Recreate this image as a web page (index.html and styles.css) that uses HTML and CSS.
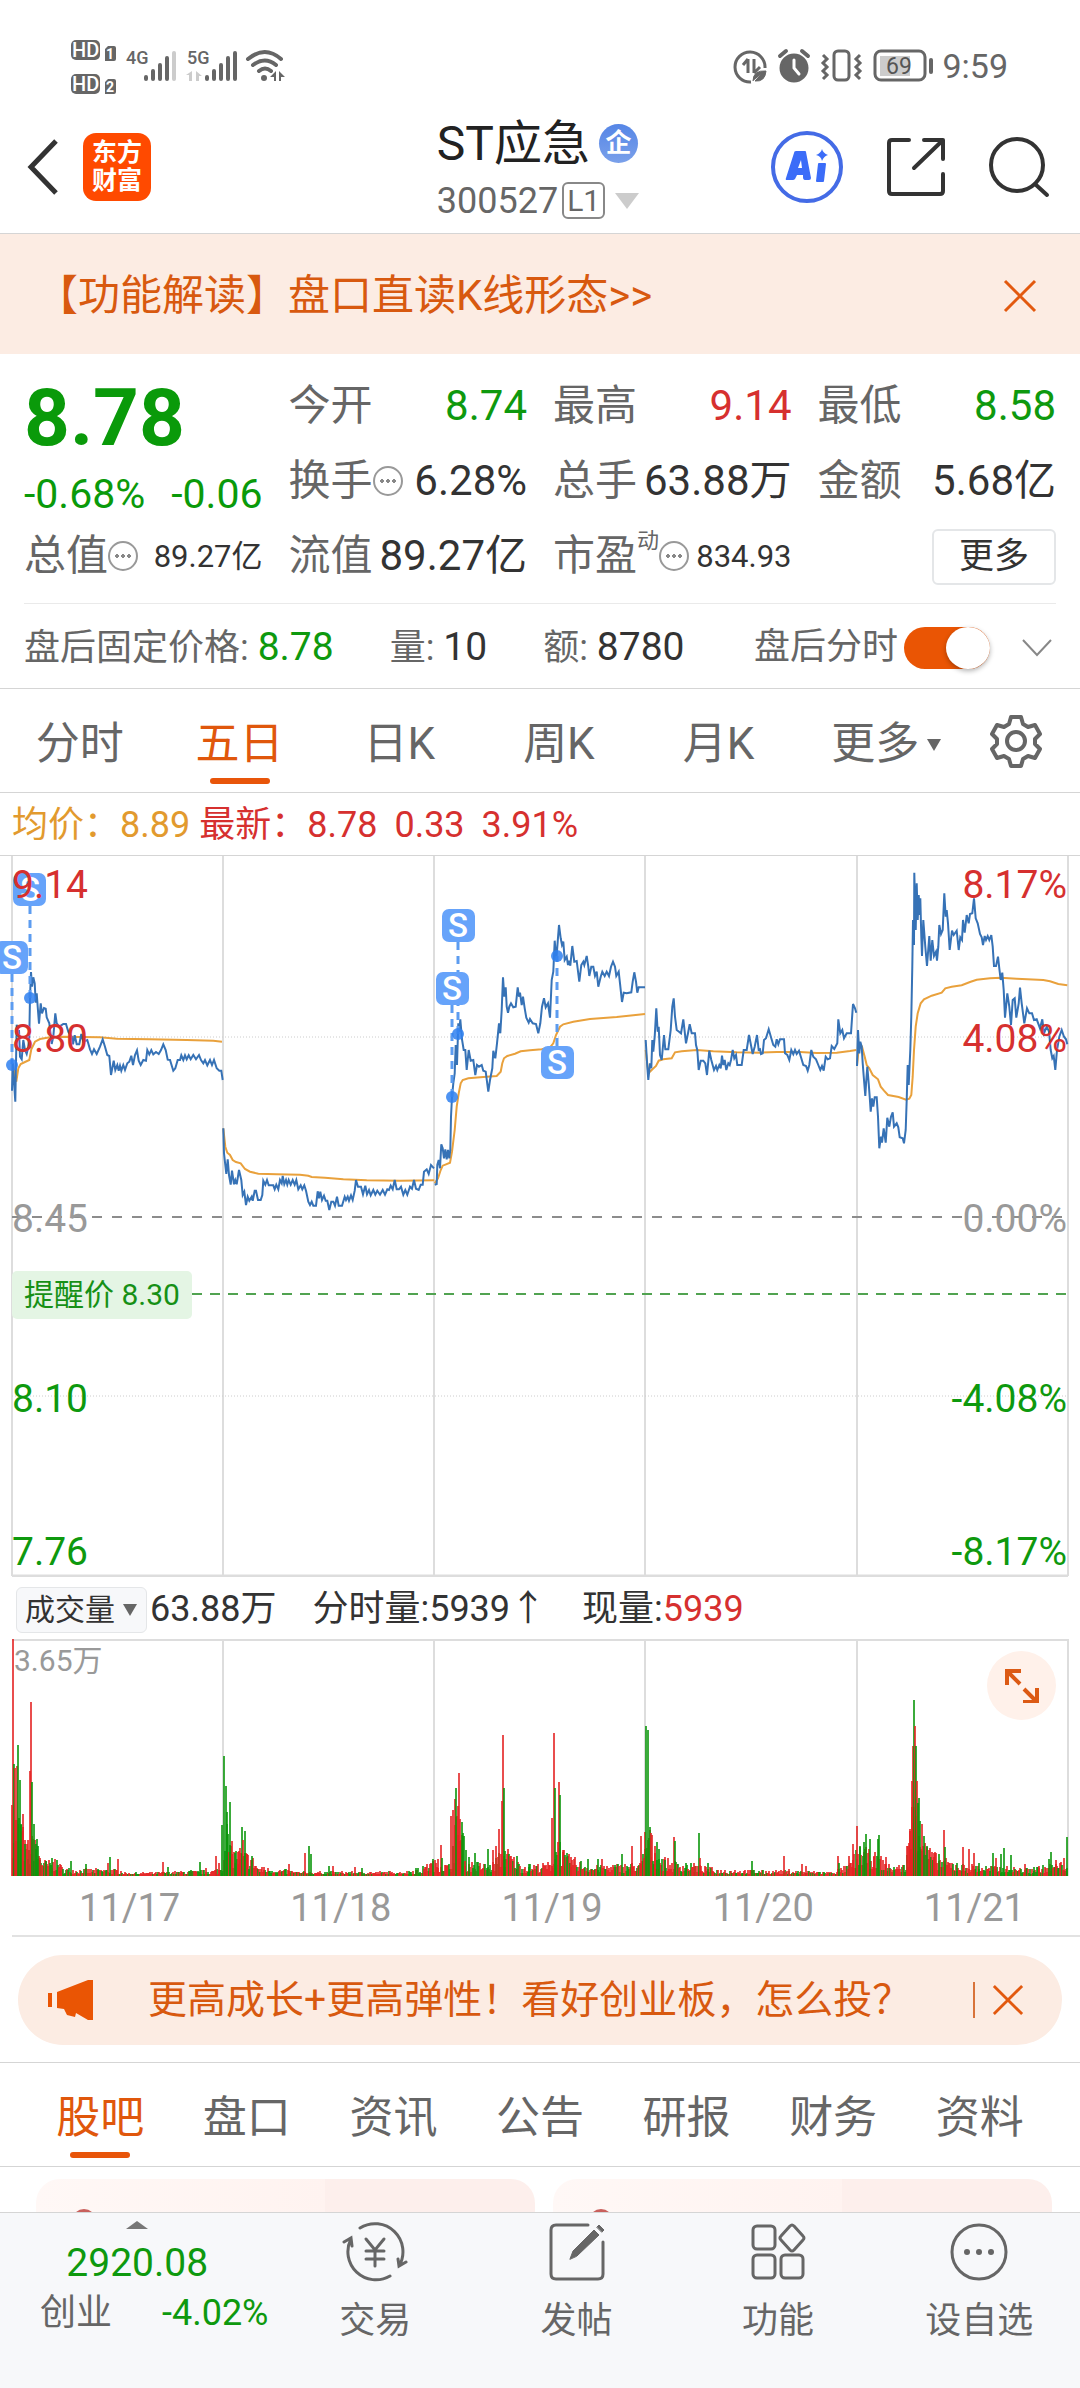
FILE: index.html
```
<!DOCTYPE html>
<html lang="zh-CN">
<head>
  <meta charset="UTF-8">
  <title>ST应急 300527</title>
  <meta name="viewport" content="width=device-width, initial-scale=1.0">
  <link rel="stylesheet" href="styles.css">
</head>
<body>
  <!-- 状态栏 -->
  <div class="status-bar">
    <svg class="status-left" width="220" height="60" viewBox="0 0 220 60" fill="#666">
      <rect x="1" y="4" width="29" height="20" rx="5"/>
      <rect x="1" y="38" width="29" height="20" rx="5"/>
      <path d="M35 13l3-3h6q2 0 2 2v11q0 2-2 2h-9zM35 46l3-3h6q2 0 2 2v11q0 2-2 2h-9z"/>
      <g class="status-hd">
        <text x="2" y="21">HD</text>
        <text x="2" y="55">HD</text>
      </g>
      <g class="status-sim">
        <text x="36" y="23">1</text>
        <text x="36" y="56">2</text>
      </g>
      <g class="status-net">
        <text x="56" y="28">4G</text>
        <text x="117" y="28">5G</text>
      </g>
      <g stroke="#666" stroke-width="4" stroke-linecap="round">
        <path d="M76 41v2M83 35v8M90 29v14M97 22v21"/>
        <path d="M104 17v26" stroke="#ccc"/>
        <path d="M137 41v2M144 35v8M151 29v14M158 22v21M165 17v26"/>
      </g>
      <path d="M122 35v10h-3v-6h-3zM126 35v10h3v-5h3z" fill="#ccc"/>
      <g fill="none" stroke="#666" stroke-width="4" stroke-linecap="round">
        <path d="M178 23q17-14 33 0M183 29q12-9 23 0M189 35q6-5 12 0"/>
      </g>
      <circle cx="194" cy="42" r="3"/>
      <path d="M206 35v10h-2v-4h-4zM209 35v10h2v-4h4z"/>
    </svg>
    <svg class="status-right" width="206" height="40" viewBox="0 0 206 40" fill="none" stroke="#666" stroke-width="3">
      <path d="M32 22a15 15 0 1 0-14 14"/>
      <path d="M15 13v14M10 19l5-6M21 13v14M21 27l6-6"/>
      <path d="M20 35q0-11 13-10-1 11-11 10l7-7" fill="#666" stroke-width="1"/>
      <circle cx="61" cy="22" r="13" fill="#666"/>
      <path d="M47 10l6-5M69 5l6 5" stroke-width="4" stroke-linecap="round"/>
      <path d="M61 14v8l5 6" stroke="#fff" stroke-linecap="round"/>
      <rect x="101" y="5" width="15" height="29" rx="4"/>
      <path d="M90 9l4 4-4 4 4 4-4 4 4 4-4 4M127 9l-4 4 4 4-4 4 4 4-4 4 4 4"/>
      <rect x="142" y="5" width="50" height="29" rx="6"/>
      <rect x="147" y="10" width="30" height="20" fill="#ccc" stroke="none"/>
      <path d="M198 14v12" stroke-width="4" stroke-linecap="round"/>
      <text class="battery-num" x="153" y="28">69</text>
    </svg>
    <span class="clock">9:59</span>
  </div>

  <header class="header">
    <div class="header-left">
      <button class="icon-btn" aria-label="返回">
        <svg width="34" height="58" viewBox="0 0 34 58" fill="none" stroke="#333" stroke-width="5"><path d="M30 3L5 29l25 26"/></svg>
      </button>
      <a class="logo" href="#">东方<br>财富</a>
    </div>
    <div class="header-title">
      <h1>ST应急<span class="corp">企</span></h1>
      <p class="code">300527<span class="level">L1</span>
        <svg width="24" height="16" viewBox="0 0 24 16" fill="#ccc"><path d="M0 0h24L12 16z"/></svg>
      </p>
    </div>
    <div class="header-right">
      <button class="icon-btn" aria-label="AI">
        <svg width="74" height="74" viewBox="0 0 74 74" fill="#3b6cf8">
          <circle cx="37" cy="37" r="34" fill="none" stroke="#446be6" stroke-width="4"/>
          <path class="ai-mark" d="M26 21h9q1 0 1 1l5 26q0 2-2 2h-4q-2 0-2-3v-2h-6l-2 4q-1 1-2 1h-6q-2 0-1-2l8-25q0-2 2-2zm2 17h4l-1-8zM49 33h6q1 0 1 1l-2 17q0 1-1 1h-6q-1 0-1-1l2-17q0-1 1-1zM52 19q1 4 6 6-4 1-6 6-1-5-6-6 5-2 6-6z" fill-rule="evenodd"/>
        </svg>
      </button>
      <button class="icon-btn" aria-label="分享">
        <svg width="60" height="60" viewBox="0 0 60 60" fill="none" stroke="#333" stroke-width="4" stroke-linecap="round" stroke-linejoin="round"><path d="M23 3H6q-3 0-3 3v48q0 3 3 3h48q3 0 3-3V37M38 3h19v19M56 4L28 31"/></svg>
      </button>
      <button class="icon-btn" aria-label="搜索">
        <svg width="62" height="62" viewBox="0 0 62 62" fill="none" stroke="#333" stroke-width="4" stroke-linecap="round"><circle cx="29" cy="29" r="26"/><path d="M47 48l12 11"/></svg>
      </button>
    </div>
  </header>

  <div class="notice">
    <a href="#">【功能解读】盘口直读K线形态&gt;&gt;</a>
    <button class="icon-btn" aria-label="关闭">
      <svg width="34" height="34" viewBox="0 0 34 34" stroke="#e2590f" stroke-width="3"><path d="M2 2l30 30M32 2L2 32"/></svg>
    </button>
  </div>

  <!-- 行情数据 -->
  <section class="quote">
    <div class="price-box">
      <div class="price">8.78</div>
      <div class="change"><span>-0.68%</span><span>-0.06</span></div>
    </div>
    <div class="item"><span class="label">今开</span><span class="down">8.74</span></div>
    <div class="item"><span class="label">最高</span><span class="up">9.14</span></div>
    <div class="item"><span class="label">最低</span><span class="down">8.58</span></div>
    <div class="item"><span class="label">换手<i class="info"></i></span><span>6.28%</span></div>
    <div class="item"><span class="label">总手</span><span>63.88万</span></div>
    <div class="item"><span class="label">金额</span><span>5.68亿</span></div>
    <div class="item"><span class="label">总值<i class="info"></i></span><span class="small">89.27亿</span></div>
    <div class="item"><span class="label">流值</span><span>89.27亿</span></div>
    <div class="item"><span class="label">市盈<sup>动</sup><i class="info"></i></span><span class="small">834.93</span></div>
    <div class="item item-more"><button class="more-btn">更多</button></div>
  </section>

  <section class="after">
    <span>盘后固定价格: <b class="down">8.78</b></span>
    <span>量: <b>10</b></span>
    <span>额: <b>8780</b></span>
    <label class="after-switch" for="afterHours">盘后分时<input type="checkbox" id="afterHours" class="switch" checked></label>
    <button class="icon-btn" aria-label="展开">
      <svg width="30" height="18" viewBox="0 0 30 18" fill="none" stroke="#888" stroke-width="2"><path d="M1 1l14 15L29 1"/></svg>
    </button>
  </section>

  <nav class="period-tabs">
    <button class="tab">分时</button>
    <button class="tab active">五日</button>
    <button class="tab">日K</button>
    <button class="tab">周K</button>
    <button class="tab">月K</button>
    <button class="tab">更多<svg class="caret" width="14" height="12" viewBox="0 0 14 12" fill="#666"><path d="M0 0h14L7 12z"/></svg></button>
    <button class="icon-btn" aria-label="设置">
      <svg width="52" height="54" viewBox="0 0 52 54" fill="none" stroke="#666" stroke-width="4" stroke-linejoin="round">
        <path d="M21 3h10l2 7 5 3 7-2 5 9-5 5v5l5 5-5 9-7-2-5 3-2 7H21l-2-7-5-3-7 2-5-9 5-5v-5l-5-5 5-9 7 2 5-3z"/>
        <circle cx="26" cy="27" r="9"/>
      </svg>
    </button>
  </nav>

  <div class="chart-legend">
    <span class="avg">均价：8.89</span>
    <span class="up">最新：8.78</span>
    <span class="up pct">0.33</span>
    <span class="up pct">3.91%</span>
  </div>

  <!-- 五日走势图 -->
  <svg class="price-chart" viewBox="0 0 1080 721">
    <g stroke="#ddd" stroke-width="2">
      <path d="M12 0v720M223 0v720M434 0v720M645 0v720M857 0v720M1068 0v720"/>
      <path d="M12 720h1056" stroke-width="3"/>
      <path d="M12 181h1056M12 540h1056" stroke-width="1" stroke="#ccc" stroke-dasharray="1 2"/>
    </g>
    <path d="M12 361h1056" stroke="#8c8c8c" stroke-width="2" stroke-dasharray="10 10"/>
    <path d="M192 438h876" stroke="#51a351" stroke-width="2" stroke-dasharray="10 8"/>
    <g id="avgLines" class="avg-line"></g>
    <g id="priceLines" class="price-line"></g>
    <g class="mark-line">
      <path d="M30 50v92M12 118v90M458 86v92M452 149v92M557 190v-90"/>
    </g>
    <g fill="#2f80f0" fill-opacity=".85">
      <circle cx="30" cy="142" r="6"/>
      <circle cx="12" cy="209" r="6"/>
      <circle cx="458" cy="178" r="6"/>
      <circle cx="452" cy="241" r="6"/>
      <circle cx="557" cy="100" r="6"/>
    </g>
    <g class="mark-box">
      <rect x="13" y="17" width="33" height="33" rx="7"/>
      <rect x="-5" y="85" width="33" height="33" rx="7"/>
      <rect x="442" y="53" width="33" height="33" rx="7"/>
      <rect x="436" y="116" width="33" height="33" rx="7"/>
      <rect x="541" y="190" width="33" height="33" rx="7"/>
    </g>
    <g class="mark-text">
      <text x="30" y="45">S</text>
      <text x="12" y="113">S</text>
      <text x="458" y="81">S</text>
      <text x="452" y="144">S</text>
      <text x="557" y="218">S</text>
    </g>
    <rect x="12" y="415" width="180" height="48" rx="5" fill="#e4f5e4"/>
    <text class="alert-text" x="24" y="449">提醒价 8.30</text>
    <g class="axis">
      <text class="up" x="12" y="42">9.14</text>
      <text class="up" x="12" y="196">8.80</text>
      <text class="flat" x="12" y="376">8.45</text>
      <text class="down" x="12" y="556">8.10</text>
      <text class="down" x="12" y="709">7.76</text>
    </g>
    <g class="axis axis-right">
      <text class="up" x="1067" y="42">8.17%</text>
      <text class="up" x="1067" y="196">4.08%</text>
      <text class="flat" x="1067" y="376">0.00%</text>
      <text class="down" x="1067" y="556">-4.08%</text>
      <text class="down" x="1067" y="709">-8.17%</text>
    </g>
  </svg>

  <div class="vol-legend">
    <div class="vol-select">
      <select id="indicator" aria-label="指标">
        <option>成交量</option>
      </select>
      <svg width="14" height="12" viewBox="0 0 14 12" fill="#666"><path d="M0 0h14L7 12z"/></svg>
    </div>
    <span class="vol-total">63.88万</span>
    <span class="vol-minute">分时量:5939↑</span>
    <span>现量:<span class="up">5939</span></span>
  </div>

  <div class="volume">
    <svg class="vol-chart" viewBox="0 0 1080 238">
      <path d="M12 1h1056M223 0v237M434 0v237M645 0v237M857 0v237M1068 0v237" stroke="#ddd" stroke-width="2"/>
      <g id="volBars"></g>
      <text class="vol-max" x="14" y="32">3.65万</text>
    </svg>
    <button class="expand" aria-label="全屏">
      <svg width="34" height="34" viewBox="0 0 34 34" fill="none" stroke="#dc5a14" stroke-width="4"><path d="M2 16V2h14M3 3l12 12M32 19v14H18M31 32L19 20"/></svg>
    </button>
  </div>
  <div class="dates">
    <span>11/17</span><span>11/18</span><span>11/19</span><span>11/20</span><span>11/21</span>
  </div>

  <div class="promo">
    <svg width="46" height="40" viewBox="0 0 46 40" fill="#ea5504"><path d="M0 13h4v14H0zM9 12L40 0h5v40h-5l-12-7-1 4-8-2-3-6-7-1z"/></svg>
    <a href="#">更高成长+更高弹性！看好创业板，怎么投？</a>
    <button class="icon-btn" aria-label="关闭">
      <svg width="32" height="32" viewBox="0 0 34 34" stroke="#e2590f" stroke-width="3"><path d="M2 2l30 30M32 2L2 32"/></svg>
    </button>
  </div>

  <nav class="info-tabs">
    <button class="tab active">股吧</button>
    <button class="tab">盘口</button>
    <button class="tab">资讯</button>
    <button class="tab">公告</button>
    <button class="tab">研报</button>
    <button class="tab">财务</button>
    <button class="tab">资料</button>
  </nav>

  <div class="feed">
    <div class="card"><i class="dot"></i></div>
    <div class="card"><i class="dot"></i></div>
  </div>

  <!-- 底部导航 -->
  <footer class="bottom">
    <a class="index" href="#">
      <svg width="22" height="8" viewBox="0 0 22 8" fill="#777"><path d="M0 8L11 0l11 8z"/></svg>
      <span class="index-num">2920.08</span>
      <span class="index-row"><span>创业</span><span class="down">-4.02%</span></span>
    </a>
    <a href="#">
      <svg width="66" height="60" viewBox="0 0 66 60" fill="none" stroke="#666" stroke-width="3" stroke-linecap="round">
        <path d="M18 6a28 28 0 0 1 39 38M48 54A28 28 0 0 1 9 17M2 20l7-4 1 8M64 40l-7 4-1-7"/>
        <path d="M24 17l9 11 9-11M33 28v16M24 29h18M24 37h18"/>
      </svg>
      交易
    </a>
    <a href="#">
      <svg width="58" height="60" viewBox="0 0 58 60" fill="none" stroke="#666" stroke-width="3" stroke-linecap="round">
        <path d="M40 3H8q-5 0-5 5v44q0 5 5 5h42q5 0 5-5V20"/>
        <path d="M22 37l3-8L46 8l5 5-22 21zM49 5l2-2 5 5-2 2z" fill="#666" stroke-width="1"/>
      </svg>
      发帖
    </a>
    <a href="#">
      <svg width="56" height="58" viewBox="0 0 56 58" fill="none" stroke="#666" stroke-width="3" stroke-linejoin="round">
        <rect x="3" y="3" width="22" height="23" rx="4"/>
        <rect x="3" y="32" width="22" height="23" rx="4"/>
        <rect x="31" y="32" width="22" height="23" rx="4"/>
        <path d="M40 3q2-2 4 0l9 10q2 2 0 4l-9 10q-2 2-4 0l-9-10q-2-2 0-4z"/>
      </svg>
      功能
    </a>
    <a href="#">
      <svg width="58" height="58" viewBox="0 0 58 58" fill="#666"><circle cx="29" cy="29" r="27" fill="none" stroke="#666" stroke-width="3"/><circle cx="17" cy="29" r="3"/><circle cx="29" cy="29" r="3"/><circle cx="41" cy="29" r="3"/></svg>
      设自选
    </a>
  </footer>

  <script src="chart.js"></script>
</body>
</html>
```

FILE: styles.css
```
* {
  margin: 0;
  padding: 0;
  box-sizing: border-box;
}
body {
  background: #fff;
  color: #333;
  font-family: Roboto, "Noto Sans CJK SC", sans-serif;
  font-size: 36px;
  line-height: 1.2;
  overflow-x: hidden;
}
a {
  color: inherit;
  text-decoration: none;
}
button, select {
  font-family: inherit;
  line-height: inherit;
  color: inherit;
  background: none;
  border: none;
  cursor: pointer;
}
svg {
  display: block;
}
b, h1, i {
  font-weight: 400;
  font-style: normal;
}
.icon-btn {
  display: flex;
  align-items: center;
  justify-content: center;
}
.up { color: #d6302f; fill: #d6302f; }
.down { color: #0e990e; fill: #0e990e; }
.flat { fill: #999; }

/* 状态栏 */
.status-bar {
  display: flex;
  align-items: center;
  height: 104px;
  padding: 28px 72px 0 70px;
}
.status-right {
  margin-left: auto;
}
.status-hd text { font-size: 20px; font-weight: 500; fill: #fff; }
.status-sim text { font-size: 14px; font-weight: 700; fill: #fff; }
.status-net text { font-size: 18px; font-weight: 500; }
.battery-num { font-size: 23px; fill: #555; stroke: none; }
.clock {
  margin-left: 3px;
  font-size: 34px;
  color: #666;
}

/* 顶部标题 */
.header {
  display: grid;
  grid-template-columns: 1fr auto 1fr;
  align-items: center;
  height: 130px;
  padding: 0 30px 4px 26px;
  border-bottom: 1px solid #d5d5d5;
}
.header-left {
  display: flex;
  align-items: center;
  gap: 23px;
}
.logo {
  width: 68px;
  height: 68px;
  padding-top: 6px;
  border-radius: 13px;
  background: #ff4a00;
  color: #fff;
  font-size: 25px;
  font-weight: 700;
  line-height: 28px;
  text-align: center;
}
.header-title {
  padding-top: 10px;
}
.header-title h1 {
  display: flex;
  align-items: center;
  gap: 9px;
  font-size: 48px;
  line-height: 58px;
  color: #222;
}
.corp {
  width: 39px;
  height: 39px;
  border-radius: 50%;
  background: linear-gradient(#5686e6, #7aa0ea);
  color: #fff;
  font-size: 26px;
  font-weight: 700;
  line-height: 38px;
  text-align: center;
}
.code {
  display: flex;
  align-items: center;
  line-height: 56px;
  color: #666;
}
.level {
  height: 37px;
  margin: 0 10px 0 4px;
  padding: 0 3px;
  border: 2px solid #888;
  border-radius: 6px;
  font-size: 30px;
  line-height: 33px;
}
.header-right {
  display: flex;
  align-items: center;
  justify-content: flex-end;
  gap: 42px;
}

/* 公告条 */
.notice {
  display: flex;
  align-items: center;
  justify-content: space-between;
  height: 120px;
  padding: 4px 43px 0 36px;
  background: #fcece3;
  color: #d8590f;
  font-size: 42px;
}

/* 行情 */
.quote {
  display: grid;
  grid-template-columns: repeat(4, 1fr);
  grid-auto-rows: 75px;
  column-gap: 26px;
  padding: 15px 24px 9px;
  font-size: 42px;
}
.price-box {
  grid-row: span 2;
  color: #0a9a0a;
}
.price {
  font-size: 80px;
  font-weight: 700;
  line-height: 98px;
}
.change {
  display: flex;
  justify-content: space-between;
  font-size: 41px;
  line-height: 54px;
}
.item {
  display: flex;
  align-items: center;
  justify-content: space-between;
  white-space: nowrap;
}
.label {
  display: flex;
  align-items: center;
  color: #666;
}
.label sup {
  align-self: flex-start;
  font-size: 22px;
  line-height: 20px;
}
.info {
  display: flex;
  align-items: center;
  justify-content: center;
  width: 30px;
  height: 30px;
  border: 2px solid #999;
  border-radius: 50%;
}
.info::before {
  content: "";
  width: 18px;
  height: 4px;
  background: radial-gradient(circle, #888 2px, transparent 2px) 0 0 / 6px 4px;
}
.small {
  font-size: 31px;
}
.item-more {
  justify-content: flex-end;
}
.more-btn {
  width: 124px;
  height: 56px;
  border: 2px solid #e4e6e8;
  border-radius: 6px;
  font-size: 35px;
}

/* 盘后 */
.after {
  display: flex;
  align-items: center;
  gap: 56px;
  height: 85px;
  margin: 0 24px;
  padding: 3px 4px 0 0;
  border-top: 1px solid #eaeaea;
  color: #666;
  white-space: nowrap;
}
.after b {
  font-size: 39px;
  color: #333;
}
.after b.down {
  color: #0e990e;
}
.after-switch {
  display: flex;
  align-items: center;
  gap: 6px;
  margin: 0 -24px 0 auto;
}
.switch {
  appearance: none;
  width: 86px;
  height: 42px;
  border-radius: 21px;
  background: #ea5504;
}
.switch::before {
  content: "";
  display: block;
  width: 44px;
  height: 42px;
  margin-left: 42px;
  border-radius: 50%;
  background: #fff;
  box-shadow: 0 2px 5px rgba(0, 0, 0, 0.3);
}

/* 周期切换 */
.period-tabs {
  display: grid;
  grid-template-columns: repeat(5, 160fr) 176fr 84fr;
  height: 105px;
  padding-right: 22px;
  border-top: 1px solid #d5d5d5;
  border-bottom: 1px solid #d5d5d5;
}
.tab {
  position: relative;
  display: flex;
  align-items: center;
  justify-content: center;
  padding-top: 8px;
  color: #666;
  font-size: 44px;
}
.tab.active {
  color: #e0570c;
}
.tab.active::after {
  content: "";
  position: absolute;
  bottom: 8px;
  width: 60px;
  height: 6px;
  border-radius: 3px;
  background: #e8550a;
}
.caret {
  margin-left: 8px;
}

.chart-legend {
  display: flex;
  align-items: center;
  height: 63px;
  padding: 4px 0 0 12px;
  border-bottom: 1px solid #d5d5d5;
}
.chart-legend .avg {
  margin-right: 9px;
  color: #e29a2e;
}
.chart-legend .pct {
  margin-left: 17px;
}

/* 走势图 */
.price-chart, .vol-chart {
  width: 100%;
  height: auto;
}
.price-line {
  fill: none;
  stroke: #3672b6;
  stroke-width: 2;
}
.avg-line {
  fill: none;
  stroke: #e9a13c;
  stroke-width: 2;
}
.mark-line {
  stroke: #5c9cf0;
  stroke-width: 3;
  stroke-dasharray: 8 6;
}
.mark-box {
  fill: #66a3fa;
}
.mark-text {
  fill: #fff;
  font-size: 33px;
  font-weight: 500;
  text-anchor: middle;
}
.axis {
  font-size: 39px;
}
.axis-right {
  text-anchor: end;
}
.alert-text {
  fill: #169016;
  font-size: 30px;
}

/* 成交量 */
.vol-legend {
  display: flex;
  align-items: center;
  height: 62px;
  padding: 3px 0 0 16px;
  white-space: nowrap;
}
.vol-select {
  display: flex;
  align-items: center;
  width: 131px;
  height: 46px;
  padding-left: 8px;
  border: 1px solid #e4e6e8;
  border-radius: 6px;
  background: #f7f8fa;
}
.vol-select select {
  appearance: none;
  width: 98px;
  font-size: 30px;
}
.vol-total {
  margin-left: 3px;
}
.vol-minute {
  margin: 0 36px;
}
.volume {
  position: relative;
}
.vol-max {
  fill: #999;
  font-size: 30px;
}
.expand {
  position: absolute;
  top: 12px;
  right: 24px;
  display: flex;
  align-items: center;
  justify-content: center;
  width: 69px;
  height: 69px;
  border-radius: 50%;
  background: #fff1ea;
}
.dates {
  display: grid;
  grid-template-columns: repeat(5, 1fr);
  margin-left: 12px;
  padding-left: 12px;
  height: 60px;
  border-bottom: 2px solid #e2e2e2;
  color: #999;
  font-size: 38px;
  line-height: 62px;
  text-align: center;
}

/* 推广条 */
.promo {
  display: flex;
  align-items: center;
  height: 90px;
  margin: 18px 18px 17px;
  padding: 0 38px 0 30px;
  border-radius: 45px;
  background: #fcece3;
  color: #d8590f;
  font-size: 39px;
  white-space: nowrap;
}
.promo a {
  margin-left: 54px;
}
.promo .icon-btn {
  height: 36px;
  margin-left: auto;
  padding-left: 17px;
  border-left: 2px solid #d8733a;
}

.info-tabs {
  display: grid;
  grid-template-columns: repeat(7, 1fr);
  height: 105px;
  padding: 0 27px;
  border-top: 1px solid #d5d5d5;
  border-bottom: 1px solid #d5d5d5;
}
.feed {
  display: grid;
  grid-template-columns: 1fr 1fr;
  gap: 18px;
  height: 45px;
  padding: 12px 28px 0 36px;
  overflow: hidden;
}
.card {
  height: 120px;
  padding: 30px 36px;
  border-radius: 24px;
  background: linear-gradient(90deg, #fff8f6, #fff3f0 58%, #fdefec 58%);
}
.dot {
  display: block;
  width: 24px;
  height: 24px;
  border-radius: 50%;
  background: #c9605c;
}

/* 底部 */
.bottom {
  display: grid;
  grid-template-columns: 274fr repeat(4, 201fr);
  height: 176px;
  border-top: 1px solid #d5d5d5;
  background: #f7f8fa;
  color: #666;
}
.bottom a {
  display: flex;
  flex-direction: column;
  align-items: center;
  line-height: 50px;
}
.bottom a svg {
  height: 60px;
  margin: 9px 0 14px;
}
.bottom .index svg {
  height: 8px;
  margin: 8px 0 9px;
}
.index-num {
  color: #0e990e;
  font-size: 39px;
}
.index-row {
  display: flex;
  justify-content: space-between;
  width: 100%;
  padding: 0 6px 0 40px;
}
```

FILE: chart.js
```
// 每段: [x偏移, 点列], 单位为 1/3 像素
const prices = [
  [0, '36,722 38,640 41,680 46,755 50,524 54,560 57,540 60,620 65,628 70,570 75,600 80,612 85,590 88,560 90,440 93,366 96,410 100,382 104,400 107,458 110,430 113,470 117,521 122,460 126,490 132,474 137,476 140,502 148,520 155,582 160,560 166,490 170,520 178,530 190,522 198,522 205,545 215,560 219,583 224,556 230,583 238,583 244,552 250,575 262,570 270,598 276,612 282,598 290,612 300,590 308,568 315,590 322,615 328,618 333,675 341,632 346,660 352,645 356,662 360,647 364,662 370,645 375,660 382,640 388,635 394,617 399,645 405,615 411,601 416,632 422,645 430,630 438,632 442,600 448,613 454,600 460,613 468,606 476,612 483,600 490,583 497,600 503,629 510,630 520,662 526,655 533,630 540,630 544,616 550,630 555,616 560,628 566,616 572,628 580,615 588,628 597,615 603,630 610,640 615,630 622,646 630,630 636,645 642,630 650,655 658,662 664,662 668,690'],
  [0, '670,835 672,910 676,945 679,972 683,928 687,975 692,1004 696,962 702,1003 706,990 710,1003 717,960 724,990 728,1035 733,1025 738,1065 743,1040 748,1052 755,1040 758,1052 764,1022 768,1022 774,1050 782,1050 787,1035 790,992 796,1004 801,990 806,1006 813,1006 820,1006 824,1018 829,1004 835,1018 840,990 845,1000 848,978 853,1003 858,990 862,1004 866,990 872,1004 878,990 884,1004 889,990 895,1018 902,1006 907,1018 913,1006 918,1022 925,1055 930,1065 935,1055 940,1067 948,1067 953,1024 957,1045 961,1025 966,1050 972,1037 977,1052 982,1052 988,1080 994,1055 1000,1055 1005,1067 1011,1040 1016,1067 1026,1067 1034,1040 1038,1050 1043,1040 1047,1052 1053,1036 1058,1050 1064,1022 1068,990 1074,1010 1083,1010 1089,1033 1096,1007 1101,1033 1107,1020 1112,1036 1120,1020 1126,1034 1132,1022 1140,1034 1148,1020 1155,1034 1162,1018 1167,1020 1172,1007 1178,1018 1184,990 1190,1018 1197,1018 1203,1010 1210,1034 1216,1020 1222,1034 1230,1010 1236,1016 1242,990 1248,1016 1256,1020 1262,1004 1268,1004 1272,965 1280,958 1286,972 1293,945 1302,955'],
  [1290, '14,1004 20,1002 22,945 26,930 30,955 34,883 38,895 42,925 46,898 50,928 54,900 58,925 61,900 63,800 66,740 70,700 74,670 77,585 81,645 85,520 88,545 91,508 96,568 101,600 106,600 110,660 116,600 122,632 130,630 136,675 141,645 147,650 155,645 160,662 167,665 175,725 180,690 187,655 190,602 196,625 201,580 207,520 211,550 215,480 219,382 223,440 227,412 230,470 234,488 238,470 243,460 250,472 257,470 263,412 267,440 270,428 275,465 279,440 284,475 289,503 296,518 300,507 308,520 318,522 325,550 331,520 336,470 342,445 347,472 354,460 360,503 365,390 370,365 374,272 379,330 383,275 387,225 392,265 396,285 400,275 404,330 410,320 414,345 418,332 421,347 427,288 433,335 440,333 448,395 454,345 460,335 463,345 470,318 475,350 478,378 484,350 490,350 495,378 500,365 505,410 512,380 517,365 524,378 530,365 537,378 543,350 549,335 555,350 559,378 566,365 570,400 576,456 581,428 590,430 604,427 608,395 613,367 618,395 622,428 626,412 645,412'],
  [1290, '647,570 652,650 655,690 660,640 664,655 667,570 670,605 674,560 679,475 683,545 686,530 690,615 695,630 702,555 706,598 715,598 722,540 727,470 731,445 735,500 740,540 747,545 753,550 760,508 764,545 768,580 774,550 779,523 785,550 795,550 798,585 802,600 806,660 812,632 820,632 826,640 831,675 838,602 844,630 852,660 858,648 862,660 868,645 872,655 876,617 880,645 884,630 889,660 895,640 899,645 903,630 908,600 913,625 918,615 922,645 935,645 941,600 950,600 957,555 968,612 974,590 981,555 986,600 990,598 993,612 998,610 1002,570 1008,565 1016,538 1024,565 1030,585 1036,590 1040,568 1045,583 1050,568 1062,568 1065,610 1072,615 1078,630 1084,600 1090,613 1095,600 1100,612 1107,602 1114,625 1120,645 1128,648 1133,662 1138,645 1144,600 1150,620 1158,628 1165,645 1171,660 1176,648 1181,662 1187,620 1193,628 1200,625 1205,588 1213,597 1222,580 1225,508 1231,550 1237,540 1242,565 1250,550 1263,550 1269,462 1275,475 1279,488'],
  [2250, '321,648 324,540 328,610 331,575 335,590 338,640 342,690 346,738 349,690 352,650 356,700 359,740 362,785 366,745 370,770 374,742 380,742 384,800 388,895 393,860 396,878 401,835 407,878 412,803 418,830 423,800 428,787 432,830 440,820 445,832 449,862 458,865 462,880 467,840 470,750 473,645 476,705 481,600 484,500 487,350 489,210 492,285 493,68 497,240 500,100 503,210 506,135 509,195 511,145 514,260 516,318 520,210 526,290 531,348 538,258 542,332 547,270 552,318 558,305 561,332 565,290 568,225 573,252 578,240 583,130 587,200 590,180 594,220 599,300 606,242 611,255 620,242 626,300 631,262 636,270 639,210 644,248 650,195 656,220 660,192 667,190 672,145 677,205 683,220 690,252 695,262 699,285 704,258 708,270 713,258 718,270 724,255 728,290 732,348 738,348 744,320 748,355 752,390 757,368 761,420 765,503 772,430 778,470 783,525 788,450 794,445 799,503 806,460 810,413 815,460 823,520 831,475 838,490 846,490 852,510 860,508 870,535 877,508 882,550 890,530 897,545 902,600 907,625 911,618 916,660 921,600 928,560 935,540 942,560 948,568 952,583']
];
const averages = [
  [0, '38,640 49,695 55,655 62,642 75,636 88,630 94,598 105,575 120,567 150,562 190,560 240,561 300,562 350,566 450,568 560,570 640,572 666,575'],
  [0, '670,835 676,890 682,908 690,915 698,930 708,936 722,940 735,957 750,965 775,971 830,973 900,974 925,977 935,981 975,983 1030,988 1100,991 1200,992 1303,991'],
  [1290, '14,1000 24,985 32,960 38,947 48,943 60,938 66,905 74,840 80,770 86,730 92,700 98,690 115,685 160,681 200,678 212,665 217,640 222,625 232,618 255,611 272,604 300,601 335,598 360,592 370,580 378,555 390,530 400,523 430,515 480,507 560,501 610,496 645,492'],
  [1290, '647,600 655,670 668,657 678,648 686,632 700,628 725,625 735,607 755,604 800,600 850,604 920,607 990,608 1040,606 1110,606 1160,609 1220,608 1260,603 1279,600'],
  [2250, '321,648 326,595 336,590 344,620 350,645 358,655 368,675 384,688 392,710 402,722 414,735 446,741 468,749 478,746 484,735 488,680 492,600 497,530 503,490 512,460 522,448 545,437 575,428 586,415 605,410 635,406 660,396 680,389 720,385 752,383 800,386 880,390 900,394 925,402 952,406']
];

function drawLines(id, days) {
  document.getElementById(id).innerHTML = days.map(([offset, points]) => {
    const pts = points.split(' ').map(p => {
      const [x, y] = p.split(',').map(Number);
      return ((x + offset) / 3).toFixed(1) + ',' + ((y - 18) / 3).toFixed(1);
    });
    return '<polyline points="' + pts.join(' ') + '"/>';
  }).join('');
}
drawLines('avgLines', averages);
drawLines('priceLines', prices);

// 成交量: 主要柱子 x 高度 颜色
const peaks = '12 71 r,13 237 r,14 112 g,15 108 r,17 110 r,18 131 g,20 96 g,21 52 g,23 62 r,25 32 g,28 36 r,30 105 r,31 174 r,32 94 g,34 52 g,36 32 g,38 30 g,40 18 r,46 15 g,52 18 g,55 17 r,60 12 r,71 15 g,86 12 g,108 13 r,110 19 g,118 17 r,163 14 r,168 9 g,191 6 g,200 14 g,206 8 r,216 20 r,219 13 r,' +
  '222 51 g,224 120 g,226 90 g,227 64 g,230 74 g,232 35 r,235 23 g,238 24 r,240 28 r,242 49 g,243 36 r,245 45 g,247 22 r,252 20 g,264 9 r,289 12 r,305 23 r,309 30 g,311 22 g,329 10 g,333 10 r,355 9 r,362 8 g,416 8 g,425 9 r,430 12 r,' +
  '433 17 g,438 17 r,441 31 r,442 18 g,451 60 r,453 66 r,455 77 r,456 88 g,458 70 r,459 103 r,460 57 r,462 54 g,465 15 r,469 19 g,475 23 g,488 27 g,493 26 r,496 30 r,499 47 r,502 75 r,503 141 r,504 88 g,505 25 g,510 15 r,517 20 g,529 12 g,552 58 r,554 143 r,555 88 g,558 34 r,559 94 r,560 81 g,563 24 r,571 19 r,588 17 g,598 17 g,602 17 r,622 22 g,632 30 r,641 40 r,645 44 r,' +
  '646 150 g,648 146 g,650 49 g,651 43 r,655 30 r,657 34 g,659 27 g,665 16 g,674 39 r,675 35 g,686 13 g,694 13 r,699 43 g,700 18 r,708 13 g,752 15 g,784 20 r,789 7 r,802 12 r,806 10 r,838 20 r,839 13 g,849 20 r,853 32 r,' +
  '857 50 r,860 29 g,864 34 g,866 42 g,870 37 g,874 20 r,878 37 g,879 41 g,886 19 r,907 30 r,908 30 r,910 47 r,912 95 r,913 130 r,914 176 g,915 150 r,916 130 g,917 95 r,918 73 g,919 78 g,920 55 g,922 52 r,924 40 g,927 30 g,929 26 r,934 19 r,939 22 g,944 46 r,945 29 g,957 13 g,963 29 r,969 27 r,974 23 r,979 13 g,993 23 g,996 18 r,1001 22 g,1004 28 g,1011 21 g,1025 12 r,1034 9 g,1039 10 r,1049 17 g,1051 24 g,1056 16 r,1064 18 r,1067 39 g';
// 其余分钟的量级
const base = [[12, 60], [20, 55], [24, 32], [28, 25], [34, 45], [38, 22], [44, 14], [58, 13], [62, 7], [120, 6], [125, 3], [210, 5], [222, 8], [224, 60], [230, 25], [250, 20], [258, 8], [280, 6], [300, 4], [400, 4], [420, 7], [432, 14], [450, 10], [454, 55], [462, 45], [466, 14], [490, 10], [498, 20], [506, 25], [520, 10], [550, 12], [558, 35], [564, 20], [590, 9], [640, 12], [648, 45], [655, 22], [668, 14], [720, 6], [830, 4], [848, 10], [858, 28], [880, 17], [890, 9], [905, 11], [914, 90], [920, 50], [926, 27], [940, 16], [960, 11], [985, 9], [1030, 7], [1068, 14]];
const colors = { r: '#e32222', g: '#0a960a' };

function bar(x, h, c) {
  return '<rect x="' + x + '" y="' + (237 - h) + '" width="2" height="' + h + '" fill="' + colors[c] + '" fill-opacity=".8"/>';
}

let seed = 7;
function rnd() {
  seed = (seed * 16807) % 2147483647;
  return seed / 2147483647;
}

let bars = '';
for (let x = 12, i = 0; x < 1067; x++) {
  while (x > base[i + 1][0]) i++;
  const [x0, h0] = base[i];
  const [x1, h1] = base[i + 1];
  const level = h0 + (h1 - h0) * (x - x0) / (x1 - x0);
  bars += bar(x, Math.max(2, Math.round(level * (0.3 + rnd() * 0.9))), rnd() > 0.38 ? 'r' : 'g');
}
peaks.split(',').forEach(p => {
  const [x, h, c] = p.split(' ');
  bars += bar(x - 1, Number(h), c);
});
document.getElementById('volBars').innerHTML = bars;
```
